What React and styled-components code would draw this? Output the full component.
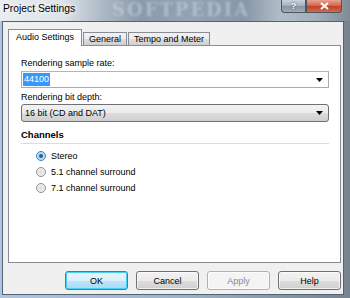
import React, { useState } from 'react';
import styled, { createGlobalStyle } from 'styled-components';

const GlobalStyle = createGlobalStyle`
  html, body {
    margin: 0;
    padding: 0;
    background: #ffffff;
  }
  body {
    font-family: "Liberation Sans", Arial, sans-serif;
    font-size: 9px;
    color: #000;
  }
`;

const Frame = styled.div`
  width: 350px;
  height: 298px;
  display: flex;
  flex-direction: column;
  background: linear-gradient(90deg, #aec5e1 0%, #9fb4cc 50%, #76838f 100%);
  overflow: hidden;
`;

const TitleBar = styled.div`
  position: relative;
  height: 21px;
  display: flex;
  align-items: flex-start;
  background: linear-gradient(
    90deg,
    #e9edf0 0%,
    #dde3e8 18%,
    #a9b6c3 30%,
    #8a9aab 40%,
    #93a3b3 55%,
    #8797a8 70%,
    #b1bcc7 80%,
    #a4afba 90%,
    #7f8b96 100%
  );
`;

const Watermark = styled.span`
  position: absolute;
  left: 112px;
  top: 0;
  line-height: 20px;
  font-family: "DejaVu Serif", serif;
  font-weight: bold;
  font-size: 18px;
  letter-spacing: 2px;
  color: rgba(225, 232, 240, 0.4);
  filter: blur(0.8px);
`;

const Title = styled.span`
  position: relative;
  padding-left: 3px;
  line-height: 18px;
  font-size: 10.3px;
  color: #000;
  text-shadow: 0 0 5px #fff, 0 0 8px #fff;
`;

const CaptionButtons = styled.div`
  position: relative;
  margin-left: auto;
  margin-right: 8px;
  display: flex;
`;

const CaptionButton = styled.div`
  height: 13px;
  display: flex;
  align-items: center;
  justify-content: center;
  box-sizing: border-box;
  border: 1px solid #4c5661;
  border-top: none;
  color: #fff;
  font-weight: bold;
  font-size: 9px;
  width: ${(p) => (p.$close ? '36px' : '25px')};
  border-radius: ${(p) => (p.$close ? '0 0 4px 0' : '0 0 0 4px')};
  background: ${(p) =>
    p.$close
      ? 'linear-gradient(180deg, #e5a38f 0%, #d46a50 45%, #c2412a 55%, #d26a4e 100%)'
      : 'linear-gradient(180deg, #c9d2dc 0%, #a5b2bf 45%, #8796a5 55%, #a0adb9 100%)'};
  text-shadow: 0 0 2px #333;
`;

const Client = styled.div`
  flex: 1;
  margin: 0 6px 3px 2px;
  border: 1px solid #56626e;
  background: #f0f0f0;
  padding: 7px 2px 4px 5px;
  display: flex;
  flex-direction: column;
`;

const TabStrip = styled.div`
  display: flex;
  align-items: flex-end;
  height: 16px;
  position: relative;
  z-index: 1;
`;

const Tab = styled.div`
  box-sizing: border-box;
  border: 1px solid #898c95;
  border-bottom: none;
  display: flex;
  align-items: center;
  line-height: 1;
  height: ${(p) => (p.$active ? '17px' : '13px')};
  margin-bottom: ${(p) => (p.$active ? '-1px' : '0')};
  padding: ${(p) => (p.$active ? '0 7px 2px 7px' : '0 5px')};
  background: ${(p) =>
    p.$active ? '#ffffff' : 'linear-gradient(180deg, #f2f2f2 0%, #ebebeb 50%, #dddddd 51%, #cfcfcf 100%)'};
  margin-left: ${(p) => (p.$first ? '0' : '1px')};
  cursor: default;
`;

const Panel = styled.div`
  height: 218px;
  box-sizing: border-box;
  border: 1px solid #898c95;
  background: #fff;
  padding: 11px 11px 0 12px;
  display: flex;
  flex-direction: column;
`;

const FieldLabel = styled.div`
  height: 12px;
  line-height: 12px;
  margin-bottom: ${(p) => p.$gap || 2}px;
`;

const EditCombo = styled.div`
  height: 17px;
  box-sizing: border-box;
  border: 1px solid #a5acb5;
  border-top-color: #abb6c8;
  background: #fff;
  display: flex;
  align-items: center;
  padding: 0 5px 0 1px;
  margin-bottom: 3px;
`;

const Selection = styled.span`
  background: #3399ff;
  color: #fff;
  padding: 1px 1px;
  line-height: 11px;
`;

const DropCombo = styled.div`
  height: 18px;
  box-sizing: border-box;
  border: 1px solid #707070;
  border-radius: 3px;
  background: linear-gradient(180deg, #f2f2f2 0%, #ebebeb 50%, #dddddd 51%, #cfcfcf 100%);
  display: flex;
  align-items: center;
  padding: 0 5px 0 3px;
  margin-bottom: 7px;
`;

const Arrow = styled.svg`
  margin-left: auto;
  width: 7px;
  height: 4px;
`;

const GroupTitle = styled.div`
  font-weight: bold;
  font-size: 9.5px;
  line-height: 12px;
  padding-bottom: 2px;
  border-bottom: 1px solid #d5dfe5;
  margin-bottom: 6px;
`;

const RadioList = styled.div`
  display: flex;
  flex-direction: column;
  gap: 4px;
  padding-left: 15px;
`;

const RadioRow = styled.label`
  display: flex;
  align-items: center;
  height: 12px;
  gap: 5px;
  cursor: default;
`;

const RadioDot = styled.span`
  width: 10px;
  height: 10px;
  box-sizing: border-box;
  border-radius: 50%;
  border: 1px solid ${(p) => (p.$on ? '#3d7bad' : '#8e8f8f')};
  background: ${(p) =>
    p.$on
      ? 'radial-gradient(circle, #0c4f8c 0%, #2f7cc2 30%, #b9d6ef 45%, #e6f1fa 100%)'
      : 'radial-gradient(circle, #d9d9d9 0%, #ececec 50%, #f4f4f4 100%)'};
`;

const ButtonRow = styled.div`
  margin-top: 8px;
  display: flex;
  justify-content: flex-end;
  gap: 8px;
`;

const Button = styled.button`
  width: 63px;
  height: 19px;
  box-sizing: border-box;
  padding: 0;
  font-family: "Liberation Sans", Arial, sans-serif;
  font-size: 9px;
  border-radius: 3px;
  border: 1px solid ${(p) => (p.$default ? '#3c7fb1' : p.disabled ? '#adb2b5' : '#707070')};
  color: ${(p) => (p.disabled ? '#8a8a8a' : '#000')};
  background: ${(p) =>
    p.disabled
      ? '#f4f4f4'
      : p.$default
      ? 'linear-gradient(180deg, #eaf6fd 0%, #d9f0fc 50%, #bee6fd 51%, #a7d9f5 100%)'
      : 'linear-gradient(180deg, #f2f2f2 0%, #ebebeb 50%, #dddddd 51%, #cfcfcf 100%)'};
  box-shadow: ${(p) => (p.$default ? 'inset 0 0 0 1px #48d1f7' : 'inset 0 0 0 1px rgba(255,255,255,0.7)')};
`;

const channels = ['Stereo', '5.1 channel surround', '7.1 channel surround'];

const App = () => {
  const [channel, setChannel] = useState(0);

  return (
    <>
      <GlobalStyle />
      <Frame>
        <TitleBar>
          <Watermark>SOFTPEDIA</Watermark>
          <Title>Project Settings</Title>
          <CaptionButtons>
            <CaptionButton>?</CaptionButton>
            <CaptionButton $close>
              <svg width="9" height="8" viewBox="0 0 9 8">
                <path d="M1 1 L8 7 M8 1 L1 7" stroke="#fff" strokeWidth="2" />
              </svg>
            </CaptionButton>
          </CaptionButtons>
        </TitleBar>
        <Client>
          <TabStrip>
            <Tab $active $first>Audio Settings</Tab>
            <Tab>General</Tab>
            <Tab>Tempo and Meter</Tab>
          </TabStrip>
          <Panel>
            <FieldLabel>Rendering sample rate:</FieldLabel>
            <EditCombo>
              <Selection>44100</Selection>
              <Arrow viewBox="0 0 7 4">
                <path d="M0 0 H7 L3.5 4 Z" fill="#000" />
              </Arrow>
            </EditCombo>
            <FieldLabel $gap={1}>Rendering bit depth:</FieldLabel>
            <DropCombo>
              16 bit (CD and DAT)
              <Arrow viewBox="0 0 7 4">
                <path d="M0 0 H7 L3.5 4 Z" fill="#000" />
              </Arrow>
            </DropCombo>
            <GroupTitle>Channels</GroupTitle>
            <RadioList>
              {channels.map((name, i) => (
                <RadioRow key={name} onClick={() => setChannel(i)}>
                  <RadioDot $on={channel === i} />
                  {name}
                </RadioRow>
              ))}
            </RadioList>
          </Panel>
          <ButtonRow>
            <Button $default>OK</Button>
            <Button>Cancel</Button>
            <Button disabled>Apply</Button>
            <Button>Help</Button>
          </ButtonRow>
        </Client>
      </Frame>
    </>
  );
};

export default App;
